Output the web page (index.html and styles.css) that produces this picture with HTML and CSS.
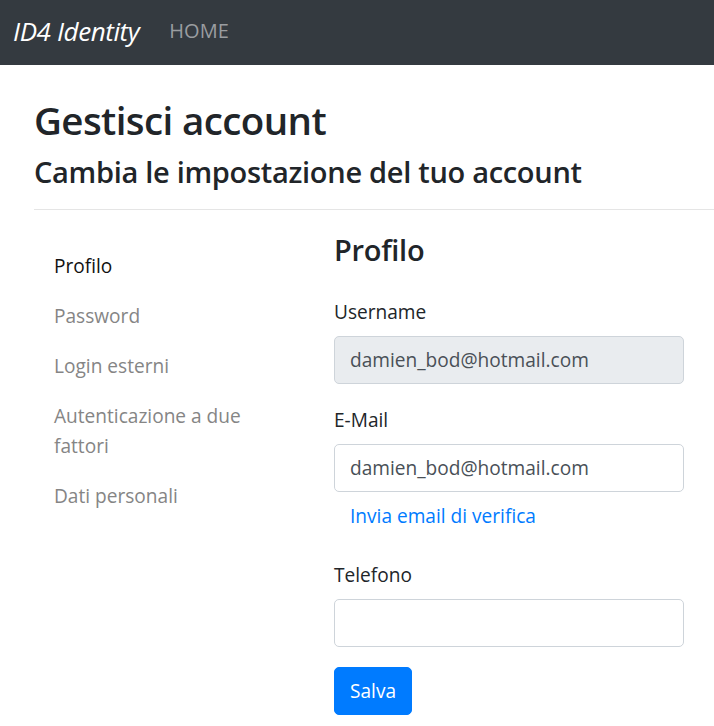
FILE: index.html
```html
<!DOCTYPE html>
<html lang="it">
<head>
<meta charset="utf-8">
<title>Gestisci account</title>
<link rel="stylesheet" href="styles.css">
</head>
<body>
<nav class="navbar">
  <a class="brand" href="#">ID4 Identity</a>
  <a class="nav-home" href="#">HOME</a>
</nav>
<main class="container">
  <h1 class="title">Gestisci account</h1>
  <h2 class="subtitle">Cambia le impostazione del tuo account</h2>
  <hr class="divider">
  <div class="row">
    <ul class="side-nav">
      <li><a class="side-link active" href="#">Profilo</a></li>
      <li><a class="side-link" href="#">Password</a></li>
      <li><a class="side-link" href="#">Login esterni</a></li>
      <li><a class="side-link" href="#">Autenticazione a due fattori</a></li>
      <li><a class="side-link" href="#">Dati personali</a></li>
    </ul>
    <section class="content">
      <h3 class="section-title">Profilo</h3>
      <form class="form">
        <div class="form-group">
          <label class="label">Username</label>
          <input class="input input-disabled" type="text" value="damien_bod@hotmail.com" disabled>
        </div>
        <div class="form-group">
          <label class="label">E-Mail</label>
          <input class="input" type="text" value="damien_bod@hotmail.com">
          <button type="button" class="btn-link">Invia email di verifica</button>
        </div>
        <div class="form-group">
          <label class="label">Telefono</label>
          <input class="input" type="text" value="">
        </div>
        <button type="button" class="btn-primary">Salva</button>
      </form>
    </section>
  </div>
</main>
</body>
</html>
```
FILE: styles.css
```css
* { box-sizing: border-box; }
html, body { margin: 0; padding: 0; }
body {
  font-family: "Open Sans", "Noto Sans", sans-serif;
  font-size: 19.1px;
  line-height: 30px;
  color: #212529;
  background: #fff;
  overflow: hidden;
  width: 714px;
}
.navbar {
  height: 65px;
  background: #343a40;
  display: flex;
  align-items: center;
  padding-left: 13px;
}
.brand {
  font-style: italic;
  color: #fff;
  text-decoration: none;
  font-size: 26px;
  line-height: 30px;
  letter-spacing: -0.4px;
  margin-right: 30px;
  margin-top: -3px;
}
.nav-home {
  color: #9a9da0;
  text-decoration: none;
  font-size: 20px;
  line-height: 30px;
  margin-top: -3px;
}
.container {
  padding-left: 34px;
  padding-top: 31px;
}
.title {
  margin: 0 0 10px;
  font-size: 38.5px;
  line-height: 48px;
  font-weight: 600;
  letter-spacing: -0.6px;
}
.subtitle {
  margin: 0;
  font-size: 29px;
  line-height: 36px;
  font-weight: 600;
  letter-spacing: -0.3px;
}
.divider {
  margin: 19px 0 0;
  border: 0;
  border-top: 1px solid #e5e5e5;
}
.row {
  display: flex;
  padding-top: 22px;
}
.side-nav {
  list-style: none;
  margin: 9px 0 0 0;
  padding: 0;
  width: 262px;
}
.side-nav li { display: block; }
.side-link {
  display: block;
  padding: 10px 20px;
  color: #858585;
  text-decoration: none;
  line-height: 30px;
}
.side-link.active { color: #111; }
.content {
  margin-left: 38px;
  width: 350px;
}
.section-title {
  margin: 0 0 29px;
  font-size: 29px;
  line-height: 36px;
  font-weight: 600;
  letter-spacing: -0.3px;
}
.form-group { margin-bottom: 21px; }
.label {
  display: block;
  margin-bottom: 9px;
  line-height: 30px;
}
.input {
  display: block;
  width: 350px;
  height: 48px;
  padding: 0 15px;
  font-family: inherit;
  font-size: 19.1px;
  color: #495057;
  background: #fff;
  border: 1px solid #ced4da;
  border-radius: 5px;
}
.input-disabled {
  background: #e9ecef;
  opacity: 1;
}
.btn-link {
  display: block;
  background: none;
  border: 1px solid transparent;
  padding: 7px 15px;
  height: 47px;
  font-family: inherit;
  font-size: 19.1px;
  line-height: 30px;
  color: #007bff;
  cursor: pointer;
}
.btn-primary {
  display: block;
  margin-top: -1px;
  background: #007bff;
  color: #fff;
  border: 1px solid #007bff;
  border-radius: 5px;
  height: 48px;
  padding: 0 15px;
  font-family: inherit;
  font-size: 19.1px;
  line-height: 30px;
}
```
